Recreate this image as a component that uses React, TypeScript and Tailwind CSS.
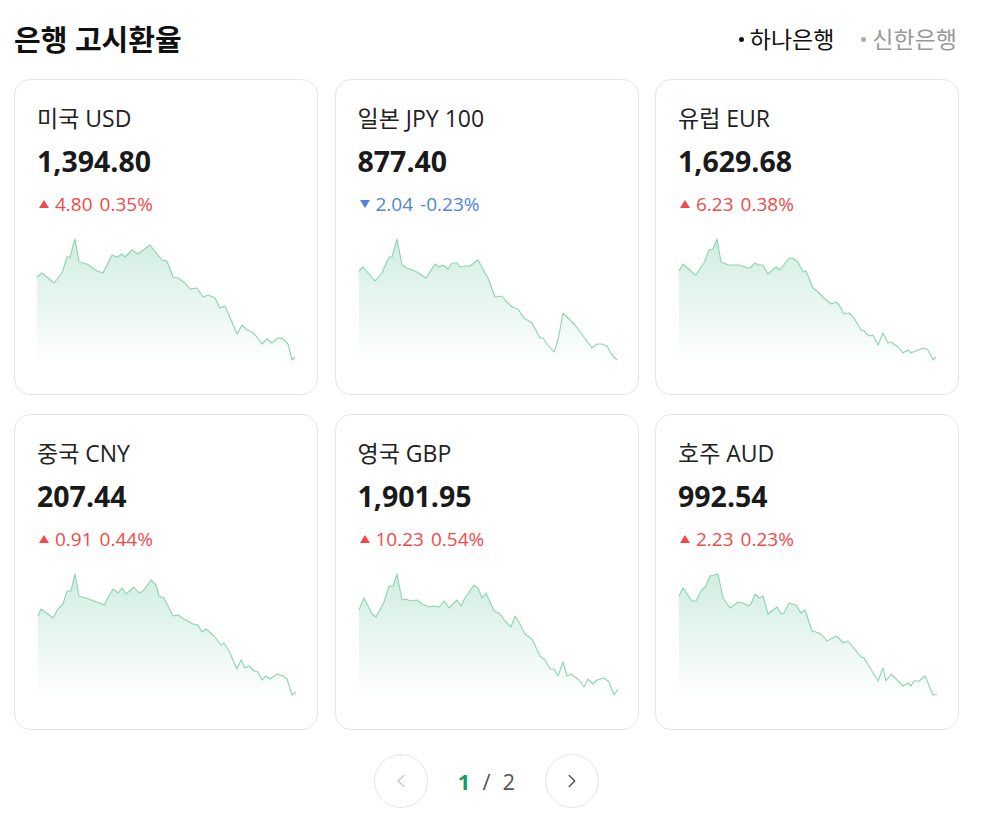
import React from "react";
import { ChevronLeft, ChevronRight } from "lucide-react";

type Pt = [number, number];

interface Rate {
  id: string;
  name: string;
  code: string;
  price: string;
  diff: string;
  pct: string;
  up: boolean;
  points: Pt[];
}

const FONT = { fontFamily: '"Open Sans", "Noto Sans CJK KR", sans-serif' };

const rates: Rate[] = [
  {
    id: "usd", name: "미국", code: "USD", price: "1,394.80", diff: "4.80", pct: "0.35%", up: true,
    points: [[0,42],[5,38],[17,48],[25,38],[30,22],[33,22],[38,4],[42,27],[50,29],[60,36],[66,38],[75,20],[80,22],[85,19],[88,22],[95,15],[101,19],[113,10],[125,25],[130,26],[136,42],[141,43],[148,48],[153,54],[160,53],[166,62],[171,60],[178,63],[183,73],[188,71],[200,99],[205,90],[210,95],[215,97],[220,102],[225,109],[230,104],[235,108],[241,103],[246,104],[251,109],[255,125],[258,122]],
  },
  {
    id: "jpy", name: "일본", code: "JPY 100", price: "877.40", diff: "2.04", pct: "-0.23%", up: false,
    points: [[1,36],[5,32],[17,46],[24,38],[31,22],[34,22],[39,4],[44,30],[49,33],[59,37],[68,43],[77,29],[81,32],[85,30],[90,34],[94,28],[99,28],[102,32],[107,31],[112,31],[120,25],[127,38],[130,43],[137,62],[144,61],[147,65],[154,72],[160,74],[166,83],[174,88],[182,103],[185,103],[189,109],[196,117],[200,105],[205,78],[211,84],[217,90],[234,113],[239,109],[244,109],[249,111],[254,120],[259,125]],
  },
  {
    id: "eur", name: "유럽", code: "EUR", price: "1,629.68", diff: "6.23", pct: "0.38%", up: true,
    points: [[1,36],[5,29],[15,38],[18,40],[23,32],[26,28],[31,15],[35,14],[39,4],[43,27],[50,30],[61,30],[70,33],[72,33],[77,28],[81,30],[85,30],[90,39],[98,32],[102,35],[111,23],[116,24],[120,27],[125,37],[128,36],[135,53],[139,56],[146,63],[153,69],[158,67],[161,70],[166,79],[171,78],[176,83],[183,95],[186,96],[191,101],[195,100],[200,110],[205,98],[210,108],[213,107],[220,112],[225,118],[230,115],[233,118],[240,115],[246,113],[250,115],[255,125],[258,122]],
  },
  {
    id: "cny", name: "중국", code: "CNY", price: "207.44", diff: "0.91", pct: "0.44%", up: true,
    points: [[1,46],[4,39],[16,48],[21,39],[26,34],[30,21],[34,21],[38,4],[42,26],[52,29],[59,32],[63,33],[67,35],[76,19],[81,23],[85,18],[89,24],[97,17],[102,23],[106,21],[114,10],[119,15],[122,26],[127,28],[136,46],[141,45],[147,49],[156,54],[161,55],[165,62],[169,59],[177,66],[184,75],[187,73],[192,81],[200,99],[204,90],[208,98],[212,96],[217,101],[221,102],[225,110],[229,106],[233,109],[240,104],[246,106],[250,109],[255,125],[259,122]],
  },
  {
    id: "gbp", name: "영국", code: "GBP", price: "1,901.95", diff: "10.23", pct: "0.54%", up: true,
    points: [[1,40],[6,28],[14,44],[18,47],[26,32],[31,16],[35,16],[39,4],[44,30],[48,29],[52,31],[59,30],[64,34],[71,37],[75,36],[81,37],[86,31],[91,38],[99,30],[103,36],[107,28],[116,15],[120,18],[124,28],[128,23],[136,41],[141,43],[147,51],[153,57],[157,46],[162,54],[167,64],[174,69],[182,86],[187,90],[192,99],[196,99],[200,106],[205,92],[209,106],[213,104],[221,110],[226,117],[230,109],[235,114],[239,110],[246,108],[251,112],[256,125],[260,119]],
  },
  {
    id: "aud", name: "호주", code: "AUD", price: "992.54", diff: "2.23", pct: "0.23%", up: true,
    points: [[1,26],[5,18],[14,31],[18,31],[23,21],[28,16],[32,6],[40,4],[45,28],[52,38],[60,32],[65,33],[70,36],[73,34],[77,24],[81,28],[85,26],[90,44],[99,37],[103,44],[106,43],[111,33],[118,35],[123,43],[127,40],[134,61],[138,62],[143,64],[149,71],[158,66],[166,73],[170,71],[183,87],[186,88],[200,111],[205,98],[208,111],[213,104],[225,116],[230,113],[233,116],[236,111],[241,111],[247,106],[255,125],[259,124]],
  },
];

// small area chart, no axes
const Spark: React.FC<{ id: string; points: Pt[] }> = ({ id, points }) => {
  const line = points.map((p, i) => `${i ? "L" : "M"}${p[0]},${p[1]}`).join(" ");
  const first = points[0];
  const last = points[points.length - 1];
  const area = `${line} L${last[0]},130 L${first[0]},130 Z`;
  return (
    <svg width="262" height="132" viewBox="0 0 262 132" className="block">
      <defs>
        <linearGradient id={`g-${id}`} x1="0" y1="0" x2="0" y2="1">
          <stop offset="0%" stopColor="#4cbb86" stopOpacity="0.26" />
          <stop offset="100%" stopColor="#4cbb86" stopOpacity="0" />
        </linearGradient>
      </defs>
      <path d={area} fill={`url(#g-${id})`} />
      <path d={line} fill="none" stroke="#8dd3b1" strokeWidth="1.1" strokeLinejoin="round" />
    </svg>
  );
};

const RateCard: React.FC<{ rate: Rate }> = ({ rate }) => (
  <div className="h-[316px] rounded-[16px] border border-[#e6e6e6] bg-white pl-[22px] pt-[24px]">
    <div className="text-[23px] leading-[28px] text-[#222]">
      {rate.name} {rate.code}
    </div>
    <div className="mt-[11px] text-[28.5px] font-bold leading-[36px] text-[#1a1a1a]">{rate.price}</div>
    <div
      className={`mt-[13px] flex items-center pl-[2px] text-[19px] leading-[24px] ${rate.up ? "text-[#f04a4a]" : "text-[#4f84dd]"}`}
    >
      <svg width="10" height="8" viewBox="0 0 10 8" className="mr-[6px]">
        {rate.up ? <path d="M5 0 L10 8 L0 8 Z" fill="currentColor" /> : <path d="M0 0 L10 0 L5 8 Z" fill="currentColor" />}
      </svg>
      <span>{rate.diff}</span>
      <span className="ml-[7px]">{rate.pct}</span>
    </div>
    <div className="mt-[19px]">
      <Spark id={rate.id} points={rate.points} />
    </div>
  </div>
);

export default function App() {
  return (
    <div className="min-h-[820px] w-[984px] bg-white" style={FONT}>
      <div className="ml-[14px] w-[945px]">
        <div className="flex h-[79px] items-center justify-between">
          <h1 className="text-[29px] font-bold text-[#111]">은행 고시환율</h1>
          <div className="flex items-center gap-[27px] pr-[2px] text-[23px]">
            <span className="flex items-center text-[#111]">
              <span className="mr-[6px] h-[5px] w-[5px] rounded-full bg-[#111]" />
              하나은행
            </span>
            <span className="flex items-center text-[#999]">
              <span className="mr-[6px] h-[5px] w-[5px] rounded-full bg-[#aaa]" />
              신한은행
            </span>
          </div>
        </div>
        <div className="grid grid-cols-3 gap-x-[16.5px] gap-y-[19px]">
          {rates.map((r) => (
            <RateCard key={r.id} rate={r} />
          ))}
        </div>
        <div className="mt-[24px] flex items-center justify-center">
          <button className="flex h-[54px] w-[54px] items-center justify-center rounded-full border border-[#e6e6e6] text-[#c8c8c8]">
            <ChevronLeft size={22} strokeWidth={1.6} />
          </button>
          <div className="mx-[30px] flex items-center gap-[12px] text-[22px]">
            <span className="font-bold text-[#12a05c]">1</span>
            <span className="text-[#555]">/</span>
            <span className="text-[#555]">2</span>
          </div>
          <button className="flex h-[54px] w-[54px] items-center justify-center rounded-full border border-[#e6e6e6] text-[#555]">
            <ChevronRight size={22} strokeWidth={1.6} />
          </button>
        </div>
      </div>
    </div>
  );
}
